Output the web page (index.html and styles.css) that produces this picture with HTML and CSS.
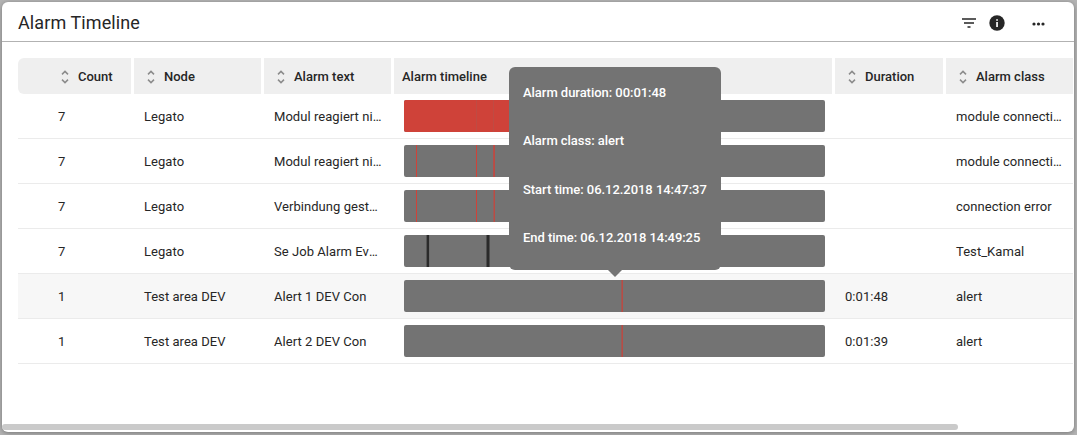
FILE: index.html
```
<!DOCTYPE html>
<html lang="en">
<head>
<meta charset="utf-8">
<title>Alarm Timeline</title>
<link rel="stylesheet" href="styles.css">
</head>
<body>
<svg width="0" height="0" class="defs"><symbol id="sort" viewBox="0 0 8 14"><path d="M1 4.4 4 1.4l3 3M1 9.6l3 3 3-3"/></symbol></svg>
<main class="card">
  <header class="card-header">
    <h1 class="title">Alarm Timeline</h1>
    <div class="actions">
      <svg class="filter" width="14" height="10" viewBox="0 0 14 10"><path d="M0 1h14M2 5h10M5.5 9h3"/></svg>
      <svg class="info" width="16" height="16" viewBox="0 0 16 16"><circle cx="8" cy="8" r="7.7"/><path d="M7.2 4.2h1.7v1.6H7.2zM7.2 7h1.7v5H7.2z"/></svg>
      <svg class="more" width="13" height="4" viewBox="0 0 13 4"><circle cx="2" cy="2" r="1.6"/><circle cx="6.5" cy="2" r="1.6"/><circle cx="11" cy="2" r="1.6"/></svg>
    </div>
  </header>
  <section class="table">
    <div class="row head">
      <div class="th th-count"><svg class="sort"><use href="#sort"/></svg>Count</div>
      <div class="th"><svg class="sort"><use href="#sort"/></svg>Node</div>
      <div class="th"><svg class="sort"><use href="#sort"/></svg>Alarm text</div>
      <div class="th th-timeline">Alarm timeline</div>
      <div class="th"><svg class="sort"><use href="#sort"/></svg>Duration</div>
      <div class="th"><svg class="sort"><use href="#sort"/></svg>Alarm class</div>
    </div>
    <div class="row">
      <div class="td count">7</div><div class="td">Legato</div><div class="td">Modul reagiert nicht</div>
      <div class="td"><svg class="bar" viewBox="0 0 421 32"><path class="alarm" d="M0 0h180v32H0z"/><path class="seam" d="M72 0h1v32h-1zM89 0h1v32h-1z"/></svg></div>
      <div class="td"></div><div class="td">module connection</div>
    </div>
    <div class="row">
      <div class="td count">7</div><div class="td">Legato</div><div class="td">Modul reagiert nicht</div>
      <div class="td"><svg class="bar" viewBox="0 0 421 32"><path class="alarm" d="M12 0h1v32h-1zM72 0h1v32h-1zM89.3 0h1.5v32h-1.5z"/></svg></div>
      <div class="td"></div><div class="td">module connection</div>
    </div>
    <div class="row">
      <div class="td count">7</div><div class="td">Legato</div><div class="td">Verbindung gestört</div>
      <div class="td"><svg class="bar" viewBox="0 0 421 32"><path class="alarm" d="M12 0h1v32h-1zM72 0h1v32h-1zM89.6 0h1.2v32h-1.2z"/></svg></div>
      <div class="td"></div><div class="td">connection error</div>
    </div>
    <div class="row">
      <div class="td count">7</div><div class="td">Legato</div><div class="td">Se Job Alarm Event</div>
      <div class="td"><svg class="bar" viewBox="0 0 421 32"><path class="job" d="M22.6 0h2.5v32h-2.5zM82.5 0h3v32h-3z"/></svg></div>
      <div class="td"></div><div class="td">Test_Kamal</div>
    </div>
    <div class="row active">
      <div class="td count">1</div><div class="td">Test area DEV</div><div class="td">Alert 1 DEV Con</div>
      <div class="td"><svg class="bar" viewBox="0 0 421 32"><path class="alert" d="M217.4 0h1.6v32h-1.6z"/></svg></div>
      <div class="td">0:01:48</div><div class="td">alert</div>
    </div>
    <div class="row">
      <div class="td count">1</div><div class="td">Test area DEV</div><div class="td">Alert 2 DEV Con</div>
      <div class="td"><svg class="bar" viewBox="0 0 421 32"><path class="alert" d="M217.4 0h1.6v32h-1.6z"/></svg></div>
      <div class="td">0:01:39</div><div class="td">alert</div>
    </div>
  </section>
  <div class="scrollbar"></div>
  <aside class="tooltip">
    <p>Alarm duration: 00:01:48</p>
    <p>Alarm class: alert</p>
    <p>Start time: 06.12.2018 14:47:37</p>
    <p>End time: 06.12.2018 14:49:25</p>
  </aside>
</main>
</body>
</html>
```
FILE: styles.css
```
* { box-sizing: border-box; }
body {
  margin: 0;
  padding: 2px 3px 3px 2px;
  height: 435px;
  overflow: hidden;
  background: #b4b4b4;
  color: #262626;
  font: 13px/16px Roboto, sans-serif;
}
.defs { position: absolute; }
.card {
  position: relative;
  display: flex;
  flex-direction: column;
  height: 430px;
  background: #fff;
  border-radius: 6px;
  box-shadow: 0 1px 5px rgba(0, 0, 0, .35);
}
.card-header {
  display: flex;
  align-items: center;
  justify-content: space-between;
  height: 40px;
  padding: 0 29px 0 16px;
  border-bottom: 1px solid #b2b2b2;
}
.title {
  margin: 0;
  padding-top: 3px;
  font-size: 18px;
  line-height: 24px;
  font-weight: 400;
  letter-spacing: .1px;
}
.actions { display: flex; align-items: center; padding-top: 2px; }
.filter { fill: none; stroke: #262626; stroke-width: 1.5; }
.info { margin: 0 27px 0 13px; fill: #262626; }
.info path { fill: #fff; }
.more { fill: #262626; margin-top: 2px; }
.table { padding: 16px 1px 0 16px; flex: 1; }
.row {
  display: grid;
  grid-template-columns: 113px 127px 127px 438px 108px 127px;
  column-gap: 3px;
  height: 45px;
  border-bottom: 1px solid #ebebeb;
}
.row.active { background: #f7f7f7; }
.row.head { height: 36px; border: 0; }
.th {
  display: flex;
  align-items: center;
  padding: 2px 0 0 13px;
  background: #efefef;
  font-weight: 500;
}
.th-count { padding-left: 43px; border-radius: 6px 0 0 6px; }
.th-timeline { padding-left: 8px; }
.sort {
  width: 8px;
  height: 14px;
  margin-right: 9px;
  fill: none;
  stroke: #8c8c8c;
  stroke-width: 1.5;
}
.td {
  padding: 15px 9px 0 10px;
  overflow: hidden;
  white-space: nowrap;
  text-overflow: ellipsis;
  letter-spacing: .05px;
}
.td.count { padding-left: 40px; }
.td:nth-child(4) { padding: 6px 7px 0 10px; }
.bar {
  display: block;
  width: 421px;
  height: 32px;
  background: #737373;
  border-radius: 2px;
  overflow: hidden;
}
.alarm { fill: #cf4239; }
.seam { fill: #bf4b43; }
.job { fill: #2a2a2a; }
.alert { fill: #b84c45; }
.scrollbar {
  width: 956px;
  height: 6px;
  margin-bottom: 2px;
  background: #cacaca;
  border-radius: 3px;
}
.tooltip {
  position: absolute;
  left: 507px;
  top: 65px;
  width: 212px;
  height: 203px;
  padding: 18px 14px 0;
  border-radius: 6px;
  background: #737373;
  color: #fff;
  font-weight: 500;
  letter-spacing: -.04px;
}
.tooltip p { margin: 0 0 32.4px; white-space: nowrap; }
.tooltip::after {
  content: "";
  position: absolute;
  left: 99px;
  top: 203px;
  border: 7px solid transparent;
  border-top-color: #737373;
  border-bottom: 0;
}
```
